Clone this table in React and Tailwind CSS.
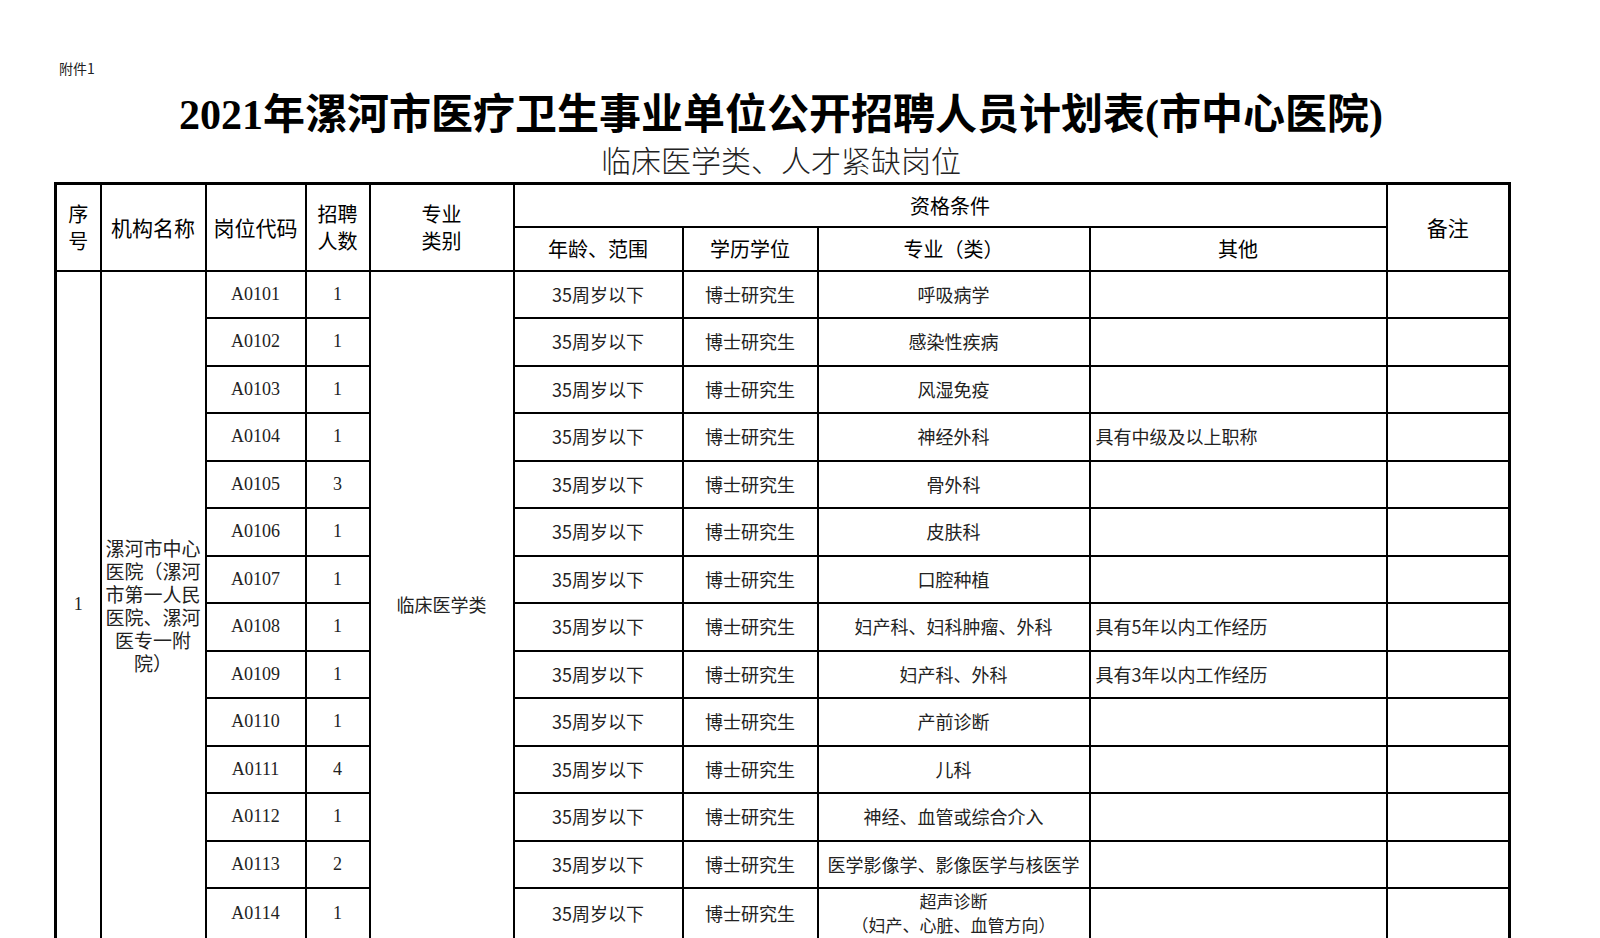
import React from 'react';

const rows = [
    ['A0101', '1', '呼吸病学', ''],
    ['A0102', '1', '感染性疾病', ''],
    ['A0103', '1', '风湿免疫', ''],
    ['A0104', '1', '神经外科', '具有中级及以上职称'],
    ['A0105', '3', '骨外科', ''],
    ['A0106', '1', '皮肤科', ''],
    ['A0107', '1', '口腔种植', ''],
    ['A0108', '1', '妇产科、妇科肿瘤、外科', '具有5年以内工作经历'],
    ['A0109', '1', '妇产科、外科', '具有3年以内工作经历'],
    ['A0110', '1', '产前诊断', ''],
    ['A0111', '4', '儿科', ''],
    ['A0112', '1', '神经、血管或综合介入', ''],
    ['A0113', '2', '医学影像学、影像医学与核医学', ''],
    ['A0114', '1', '超声诊断', ''],
];

const serif = "font-['Liberation_Serif','Noto_Sans_CJK_SC',serif]";
const sans = "font-['Noto_Sans_CJK_SC',sans-serif]";
const cell = 'border-2 border-black p-0 text-center align-middle';

const App = () => {
    return (
        <div className="w-[1600px] h-[938px] overflow-hidden bg-white text-black">
            <div className="pt-[58px] pl-[59px] text-[14px] leading-[20px] font-['Noto_Sans_CJK_SC',sans-serif] text-[#222]">
                附件1
            </div>

            <div className="w-[1454px] ml-[54px]">
                {/* Title block */}
                <h1 className={`mt-[13px] text-center text-[42px] leading-[48px] font-bold ${serif}`}>
                    2021年漯河市医疗卫生事业单位公开招聘人员计划表(市中心医院)
                </h1>
                <div className={`mt-[2px] text-center text-[30px] leading-[36px] font-light text-[#222] ${sans}`}>
                    临床医学类、人才紧缺岗位
                </div>

                {/* Plan table */}
                <table className="mt-[5px] w-[1454px] table-fixed border-collapse border-[3px] border-black">
                    <colgroup>
                        <col className="w-[45px]" />
                        <col className="w-[105px]" />
                        <col className="w-[100px]" />
                        <col className="w-[64px]" />
                        <col className="w-[144px]" />
                        <col className="w-[169px]" />
                        <col className="w-[135px]" />
                        <col className="w-[272px]" />
                        <col className="w-[297px]" />
                        <col className="w-[123px]" />
                    </colgroup>
                    <thead className={`${sans} text-[20px] leading-[27px]`}>
                        <tr className="h-[43px]">
                            <th rowSpan={2} className={`${cell} font-normal`}>序<br />号</th>
                            <th rowSpan={2} className={`${cell} font-normal text-[21px]`}>机构名称</th>
                            <th rowSpan={2} className={`${cell} font-normal text-[21px]`}>岗位代码</th>
                            <th rowSpan={2} className={`${cell} font-normal`}>招聘<br />人数</th>
                            <th rowSpan={2} className={`${cell} font-normal`}>专业<br />类别</th>
                            <th colSpan={4} className={`${cell} font-normal`}>资格条件</th>
                            <th rowSpan={2} className={`${cell} font-normal text-[21px]`}>备注</th>
                        </tr>
                        <tr className="h-[44px]">
                            <th className={`${cell} font-normal`}>年龄、范围</th>
                            <th className={`${cell} font-normal`}>学历学位</th>
                            <th className={`${cell} font-normal`}>专业（类）</th>
                            <th className={`${cell} font-normal`}>其他</th>
                        </tr>
                    </thead>
                    <tbody className="text-[#222]">
                        {rows.map(([code, num, major, other], i) => (
                            <tr key={code} className={i === rows.length - 1 ? 'h-[51px]' : 'h-[47.5px]'}>
                                {i === 0 && (
                                    <>
                                        <td rowSpan={rows.length} className={`${cell} ${serif} text-[18px]`}>1</td>
                                        <td rowSpan={rows.length} className={`${cell} ${sans} text-[19px] leading-[23px] px-[4px]`}>
                                            漯河市中心医院（漯河市第一人民医院、漯河医专一附院）
                                        </td>
                                    </>
                                )}
                                <td className={`${cell} ${serif} text-[18px]`}>{code}</td>
                                <td className={`${cell} ${serif} text-[18px]`}>{num}</td>
                                {i === 0 && (
                                    <td rowSpan={rows.length} className={`${cell} ${sans} text-[18px]`}>临床医学类</td>
                                )}
                                <td className={`${cell} ${sans} text-[18px]`}>35周岁以下</td>
                                <td className={`${cell} ${sans} text-[18px]`}>博士研究生</td>
                                {code === 'A0114' ? (
                                    <td className={`${cell} ${sans} text-[17px] leading-[24px] whitespace-nowrap`}>
                                        超声诊断<br />（妇产、心脏、血管方向）
                                    </td>
                                ) : (
                                    <td className={`${cell} ${sans} text-[18px] whitespace-nowrap`}>{major}</td>
                                )}
                                <td className={`${cell} ${sans} text-[18px] text-left pl-[5px]`}>{other}</td>
                                <td className={cell}></td>
                            </tr>
                        ))}
                    </tbody>
                </table>
            </div>
        </div>
    );
};

export default App;
